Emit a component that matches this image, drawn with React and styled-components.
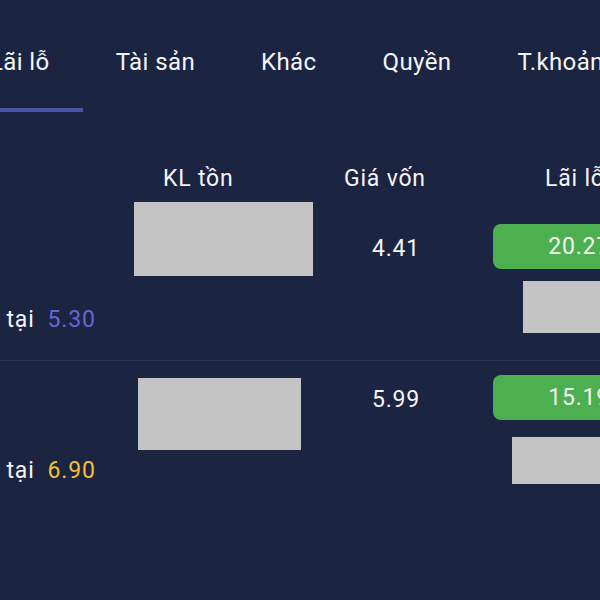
import React from 'react';
import styled, { createGlobalStyle } from 'styled-components';

const GlobalStyle = createGlobalStyle`
    body {
        margin: 0;
        background: #1b2440;
    }
`;

// column widths shared by header and rows (first column starts off-screen)
const COLS = '210px 200px 173px 240px';

const Page = styled.div`
    width: 600px;
    height: 600px;
    overflow: hidden;
    background: #1b2440;
    color: #f4f5f8;
    font-family: Roboto, "Noto Sans", sans-serif;
`;

const TabBar = styled.div`
    display: flex;
    margin-left: -43px;
    height: 112px;
`;

const Tab = styled.div`
    flex-shrink: 0;
    box-sizing: border-box;
    height: 112px;
    padding: 48px 33px 0;
    font-size: 24px;
    line-height: 28px;
    letter-spacing: 0.4px;
    white-space: nowrap;
    border-bottom: 4px solid ${props => (props.$active ? '#4a55a6' : 'transparent')};
`;

const Table = styled.div`
    display: flex;
    flex-direction: column;
    width: max-content;
    margin-left: -90px;
    font-size: 23px;
    letter-spacing: 0.8px;
`;

const HeaderRow = styled.div`
    display: grid;
    grid-template-columns: ${COLS};
    padding: 54px 0 19px;
    line-height: 26px;
    white-space: nowrap;
`;

const HeadCell = styled.div`
    padding-left: ${props => props.$indent}px;
`;

const Row = styled.div`
    display: grid;
    grid-template-columns: ${COLS};
    grid-template-rows: 45px auto;
    row-gap: 12px;
    padding: ${props => props.$top}px 0 27px;
    border-bottom: 1px solid ${props => (props.$last ? 'transparent' : '#283252')};
`;

const Redact = styled.div`
    background: #c4c4c4;
    width: ${props => props.$w}px;
    height: ${props => props.$h}px;
    margin-left: ${props => props.$x}px;
    margin-top: ${props => props.$y}px;
`;

const VolumeCell = styled.div`
    grid-column: 2;
    grid-row: 1 / span 2;
    align-self: start;
`;

const CostCell = styled.div`
    grid-column: 3;
    grid-row: 1;
    margin-top: 2px;
    padding-right: 21px;
    line-height: 45px;
    text-align: center;
`;

const ProfitPill = styled.div`
    grid-column: 4;
    grid-row: 1;
    width: 190px;
    height: 45px;
    border-radius: 8px;
    background: #4caf50;
    color: #f2f7f0;
    line-height: 45px;
    text-align: center;
`;

const PercentCell = styled.div`
    grid-column: 4;
    grid-row: 2;
`;

const PriceLine = styled.div`
    grid-column: 1;
    grid-row: 2;
    display: flex;
    gap: 13px;
    margin-top: 26px;
    padding-left: 1px;
    line-height: 26px;
    white-space: nowrap;
`;

const PriceValue = styled.span`
    color: ${props => props.$color};
`;

const tabs = ['Lãi lỗ', 'Tài sản', 'Khác', 'Quyền', 'T.khoản'];

const holdings = [
    { cost: '4.41', profit: '20.27%', price: '5.30', priceColor: '#6765d4', top: 13,
      vol: { w: 179, h: 74, x: 14, y: -22 }, pct: { w: 120, h: 52, x: 30, y: 0 } },
    { cost: '5.99', profit: '15.19%', price: '6.90', priceColor: '#f1c232', top: 14,
      vol: { w: 163, h: 72, x: 18, y: 3 }, pct: { w: 120, h: 47, x: 19, y: 5 } },
];

const App = () => {
    return (
        <Page>
            <GlobalStyle />
            <TabBar>
                {tabs.map((t, i) => (
                    <Tab key={t} $active={i === 0}>{t}</Tab>
                ))}
            </TabBar>

            <Table>
                <HeaderRow>
                    <HeadCell $indent={0}></HeadCell>
                    <HeadCell $indent={43}>KL tồn</HeadCell>
                    <HeadCell $indent={24}>Giá vốn</HeadCell>
                    <HeadCell $indent={52}>Lãi lỗ</HeadCell>
                </HeaderRow>

                {holdings.map((h, i) => (
                    <Row key={i} $top={h.top} $last={i === holdings.length - 1}>
                        <VolumeCell>
                            <Redact $w={h.vol.w} $h={h.vol.h} $x={h.vol.x} $y={h.vol.y} />
                        </VolumeCell>
                        <CostCell>{h.cost}</CostCell>
                        <ProfitPill>{h.profit}</ProfitPill>
                        <PriceLine>
                            <span>Giá hiện tại</span>
                            <PriceValue $color={h.priceColor}>{h.price}</PriceValue>
                        </PriceLine>
                        <PercentCell>
                            <Redact $w={h.pct.w} $h={h.pct.h} $x={h.pct.x} $y={h.pct.y} />
                        </PercentCell>
                    </Row>
                ))}
            </Table>
        </Page>
    );
};

export default App;
